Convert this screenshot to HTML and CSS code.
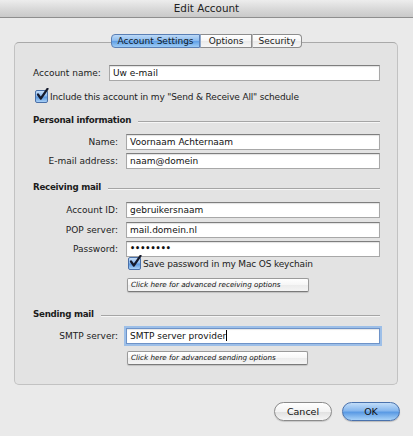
FILE: index.html
```html
<!DOCTYPE html>
<html>
<head>
<meta charset="utf-8">
<title>Edit Account</title>
<link rel="stylesheet" href="styles.css">
</head>
<body>
<div class="titlebar">Edit Account</div>
<div class="tabs">
  <span class="tab tab-first tab-selected">Account Settings</span>
  <span class="tab tab-mid">Options</span>
  <span class="tab tab-last">Security</span>
</div>
<div class="panel">
  <div class="row-account">
    <span class="label-account">Account name:</span>
    <div class="field">Uw e-mail</div>
  </div>
  <div class="check check-include">
    <span class="box"><svg width="14" height="14" viewBox="0 0 14 14"><path d="M3 6.5 L5.8 10.5 L12.5 0.8" fill="none" stroke="#151a2c" stroke-width="2.2" stroke-linecap="round" stroke-linejoin="round"/></svg></span>
    <span>Include this account in my "Send &amp; Receive All" schedule</span>
  </div>

  <div class="section-head head-personal"><span>Personal information</span><i class="rule"></i></div>
  <div class="frow first">
    <span class="label">Name:</span><div class="field">Voornaam Achternaam</div>
  </div>
  <div class="frow">
    <span class="label">E-mail address:</span><div class="field">naam@domein</div>
  </div>

  <div class="section-head head-receiving"><span>Receiving mail</span><i class="rule"></i></div>
  <div class="frow first">
    <span class="label">Account ID:</span><div class="field">gebruikersnaam</div>
  </div>
  <div class="frow wide">
    <span class="label">POP server:</span><div class="field">mail.domein.nl</div>
  </div>
  <div class="frow">
    <span class="label">Password:</span><div class="field dots">••••••••</div>
  </div>
  <div class="check check-save">
    <span class="box"><svg width="14" height="14" viewBox="0 0 14 14"><path d="M3 6.5 L5.8 10.5 L12.5 0.8" fill="none" stroke="#151a2c" stroke-width="2.2" stroke-linecap="round" stroke-linejoin="round"/></svg></span>
    <span>Save password in my Mac OS keychain</span>
  </div>
  <div class="adv adv-receive">Click here for advanced receiving options</div>

  <div class="section-head head-sending"><span>Sending mail</span><i class="rule"></i></div>
  <div class="frow first">
    <span class="label">SMTP server:</span><div class="field focus">SMTP server provider<span class="caret"></span></div>
  </div>
  <div class="adv adv-send">Click here for advanced sending options</div>
</div>
<div class="footer">
  <span class="btn btn-cancel">Cancel</span>
  <span class="btn btn-ok">OK</span>
</div>
</body>
</html>
```

FILE: styles.css
```css
* { box-sizing: border-box; }
html, body { margin: 0; padding: 0; }
body {
  width: 413px;
  height: 436px;
  overflow: hidden;
  background: #eaeaea;
  font-family: "DejaVu Sans", "Noto Sans", sans-serif;
  font-size: 9px;
  color: #1c1c1c;
}

.titlebar {
  height: 18px;
  line-height: 17px;
  text-align: center;
  font-size: 10.4px;
  color: #222;
  background: linear-gradient(#ededed, #d6d6d6 60%, #c9c9c9);
  border-bottom: 1px solid #8e8e8e;
}

.tabs {
  display: flex;
  justify-content: center;
  margin-top: 16px;
  height: 14px;
  position: relative;
  z-index: 1;
}
.tab {
  height: 14px;
  line-height: 12px;
  text-align: center;
  border: 1px solid #8d8d8d;
  border-left: 1px solid #b9b9b9;
  background: linear-gradient(#ffffff, #f5f5f5 50%, #e9e9e9 51%, #f7f7f7);
  color: #1a1a1a;
}
.tab-first { width: 89px; border-left-color: #5a7fb4; border-radius: 4px 0 0 4px; }
.tab-mid { width: 52px; border-left-color: #8ea8cc; }
.tab-last { width: 50px; border-radius: 0 4px 4px 0; }
.tab-selected {
  border-color: #5a7fb4;
  background: linear-gradient(#bcd9f7, #8fbdef 45%, #5f9fe6 52%, #9dccf6);
  color: #0f1a2a;
}

.panel {
  margin: -6px 15px 0 14px;
  height: 343px;
  padding: 22px 17px 0 18px;
  background: #e3e3e3;
  border: 1px solid #c2c2c2;
  border-top-color: #a9a9a9;
  border-radius: 5px;
}

.row-account {
  display: flex;
  align-items: center;
  gap: 8px;
  height: 16px;
}
.label-account { width: 68px; white-space: nowrap; }

.field {
  flex: 1;
  height: 16px;
  line-height: 14px;
  padding-left: 3px;
  background: #fff;
  border: 1px solid #a8a8a8;
  border-top-color: #7e7e7e;
  box-shadow: inset 0 1px 1px rgba(0, 0, 0, 0.12);
  white-space: nowrap;
  overflow: hidden;
  color: #111;
}
.field.dots { font-size: 8px; font-weight: bold; }
.field.focus {
  border-color: #6e93c8;
  box-shadow: 0 0 0 2px #9dbfe8, inset 0 1px 1px rgba(0, 0, 0, 0.1);
}
.caret {
  display: inline-block;
  width: 1px;
  height: 11px;
  background: #000;
  vertical-align: -2px;
}

.check {
  display: flex;
  align-items: center;
  gap: 2px;
  height: 13px;
  white-space: nowrap;
  letter-spacing: -0.16px;
}
.check-include { margin-top: 9px; padding-left: 2px; }
.check-save { margin-top: 0; padding-left: 95px; }
.box {
  position: relative;
  width: 13px;
  height: 13px;
  flex: none;
  border: 1px solid #4a70a8;
  border-radius: 2px;
  background: linear-gradient(#c6def8, #8cbaf0 45%, #5b98df 55%, #a9d0f6);
}
.box svg { position: absolute; left: -1px; top: -3px; }

.section-head {
  display: flex;
  align-items: center;
  height: 12px;
  font-weight: bold;
  font-size: 8.7px;
  letter-spacing: -0.25px;
  white-space: nowrap;
}
.head-personal { margin-top: 11px; }
.head-receiving { margin-top: 12px; }
.head-sending { margin-top: 16px; }
.rule {
  flex: 1;
  height: 2px;
  margin: 3px 0 0 7px;
  border-top: 1px solid #a5a5a5;
  border-bottom: 1px solid #f6f6f6;
}

.frow {
  display: flex;
  align-items: center;
  gap: 8px;
  height: 16px;
  margin-top: 3px;
}
.frow.first { margin-top: 8px; }
.head-receiving + .frow.first { margin-top: 9px; }
.frow.wide { margin-top: 4px; }
.label { width: 85px; text-align: right; white-space: nowrap; }

.adv {
  height: 14px;
  line-height: 12px;
  padding-left: 3px;
  font-size: 7.2px;
  font-style: italic;
  color: #111;
  white-space: nowrap;
  background: linear-gradient(#ffffff, #f6f6f6 50%, #ececec 51%, #f4f4f4);
  border: 1px solid #9a9a9a;
  border-bottom-color: #7a7a7a;
  border-radius: 2px;
  box-shadow: 0 1px 1px rgba(0, 0, 0, 0.15);
}
.adv-receive { margin: 8px 0 0 94px; width: 182px; }
.adv-send { margin: 7px 0 0 94px; width: 181px; }

.footer {
  display: flex;
  justify-content: flex-end;
  gap: 10px;
  margin-top: 17px;
  padding-right: 13px;
}
.btn {
  width: 58px;
  height: 19px;
  line-height: 17px;
  text-align: center;
  font-size: 9.5px;
  border-radius: 10px;
  color: #111;
}
.btn-cancel {
  border: 1px solid #8b8b8b;
  background: linear-gradient(#ffffff, #f3f3f3 50%, #e2e2e2 55%, #f6f6f6);
  box-shadow: 0 1px 1px rgba(0, 0, 0, 0.15);
}
.btn-ok {
  border: 1px solid #4a72ad;
  background: linear-gradient(#c2ddf8, #86b7ee 45%, #5a9ae4 55%, #a8d2f8);
  box-shadow: 0 1px 1px rgba(0, 0, 0, 0.2);
}
```
